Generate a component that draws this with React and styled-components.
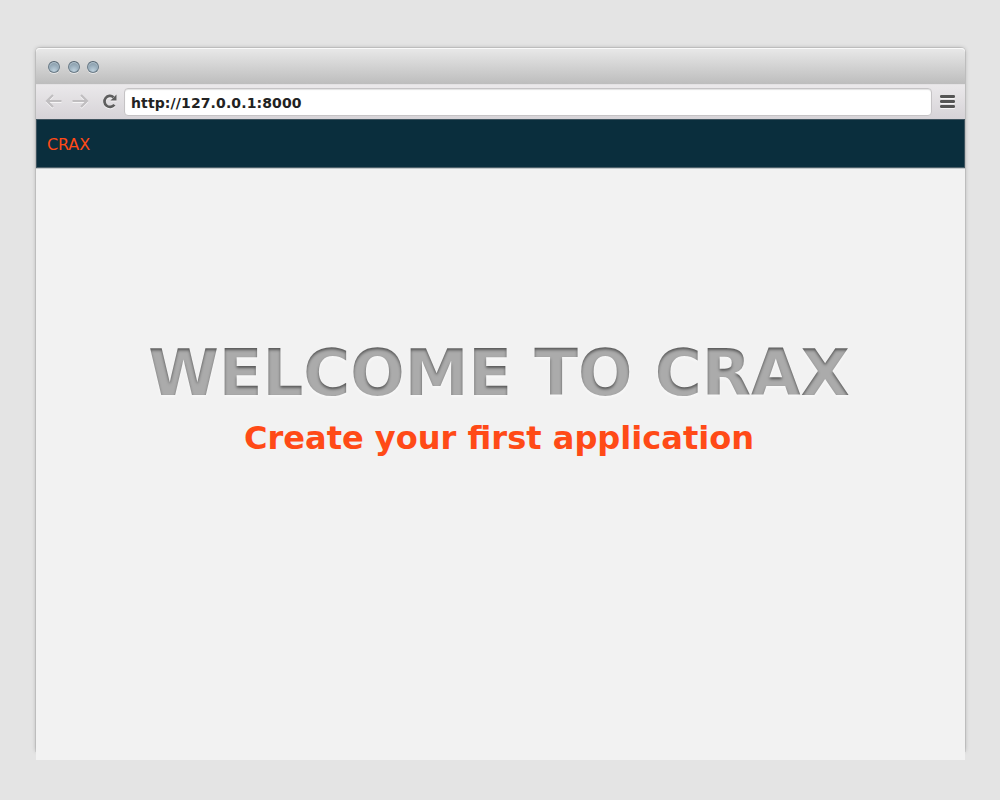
import React from "react";
import styled, { createGlobalStyle } from "styled-components";

const GlobalStyle = createGlobalStyle`
  * { box-sizing: border-box; }
  html, body { margin: 0; padding: 0; }
  body { background: #e4e4e4; font-family: "DejaVu Sans", sans-serif; }
`;

const Desktop = styled.div`
  height: 800px;
  padding: 48px 35px 0 36px;
  overflow: hidden;
`;

const BrowserWindow = styled.section`
  height: 703px;
  display: flex;
  flex-direction: column;
  border-radius: 4px 4px 0 0;
  box-shadow: 0 0 0 1px rgba(0, 0, 0, 0.07), 0 0 4px rgba(0, 0, 0, 0.25);
`;

const TitleBar = styled.header`
  flex: 0 0 36px;
  display: flex;
  align-items: center;
  gap: 7.5px;
  padding: 1px 12px 0;
  border-radius: 4px 4px 0 0;
  background: linear-gradient(#e9e9e9, #bdbdbd);
  box-shadow: inset 0 1px 0 #fafafa;
`;

const WindowButton = styled.span`
  width: 12px;
  height: 12px;
  border-radius: 50%;
  border: 1px solid #6b7c88;
  border-top-color: #53636f;
  background: radial-gradient(circle at 50% 85%, #bdd0dc 0%, #9db1bf 45%, #8599a6 85%);
  box-shadow: inset 0 1px 1px rgba(230, 242, 250, 0.5), 0 1px 0 rgba(255, 255, 255, 0.55);
`;

const Toolbar = styled.nav`
  flex: 0 0 35px;
  display: flex;
  align-items: center;
  padding: 0 10px 0 9px;
  background: linear-gradient(#ebe9eb, #d6d3d7);
  box-shadow: inset 0 1px 0 #e4e2e4;
`;

const Icon = styled.svg`
  display: block;
  flex: none;
  margin-left: ${(p) => p.$gap || 0}px;
  margin-bottom: ${(p) => p.$lift || 0}px;
  filter: drop-shadow(0 1px 0 rgba(255, 255, 255, 0.7));
`;

const AddressField = styled.div`
  flex: 1;
  height: 28px;
  margin: 0 8px 0 6px;
  padding: 2px 6px 0;
  border: 1px solid #c5c3c5;
  border-radius: 4px;
  background: #fff;
  box-shadow: inset 0 1px 1px rgba(0, 0, 0, 0.12);
  color: #222;
  font-size: 14px;
  font-weight: bold;
  line-height: 25px;
  letter-spacing: 0.12px;
`;

const Page = styled.main`
  flex: 0 0 641px;
  background: #f2f2f2;
`;

const SiteHeader = styled.div`
  height: 49px;
  padding-left: 10px;
  border: 1px solid #3e535e;
  border-bottom-color: #4c606a;
  box-shadow: 0 1px 0 #c4c9cb;
  background: #0a2e3d;
  color: #ff4a17;
  font-size: 16px;
  line-height: 49px;
  letter-spacing: -0.15px;
`;

const Welcome = styled.div`
  padding: 168px 3px 0 0;
  text-align: center;
`;

const Title = styled.h1`
  margin: 0;
  font-size: 64px;
  line-height: 74px;
  white-space: nowrap;
  color: transparent;
  background-color: #565656;
  background-clip: text;
  -webkit-background-clip: text;
  text-shadow: 0 2px 3px rgba(255, 255, 255, 0.5);
`;

const Subtitle = styled.h2`
  margin: 9px 0 0;
  color: #ff4a17;
  font-size: 32.07px;
  line-height: 38px;
`;

function BackArrow() {
  return (
    <Icon $lift={1} width="18" height="16" viewBox="0 0 18 16" fill="none" stroke="#c0bec0" strokeWidth="2.2">
      <path d="M16.5 8H2.5M8 2L2 8l6 6" />
    </Icon>
  );
}

function ForwardArrow() {
  return (
    <Icon $gap={8} $lift={1} width="18" height="16" viewBox="0 0 18 16" fill="none" stroke="#c0bec0" strokeWidth="2.2">
      <path d="M1.5 8h14M10 2l6 6-6 6" />
    </Icon>
  );
}

function Reload() {
  return (
    <Icon $gap={13} $lift={1} width="16" height="16" viewBox="0 0 16 16">
      <path d="M11.5 4.2A5.5 5.5 0 1 0 12.4 11.7" fill="none" stroke="#5e5e5e" strokeWidth="2.7" />
      <path d="M14.5 1.5V7.5H8.5Z" fill="#5e5e5e" />
    </Icon>
  );
}

function Menu() {
  return (
    <Icon width="15" height="15" viewBox="0 0 15 15" fill="#555">
      <rect y="1" width="15" height="3" rx="1.2" />
      <rect y="6" width="15" height="3" rx="1.2" />
      <rect y="11" width="15" height="3" rx="1.2" />
    </Icon>
  );
}

export default function App() {
  return (
    <Desktop>
      <GlobalStyle />
      <BrowserWindow>
        <TitleBar>
          <WindowButton />
          <WindowButton />
          <WindowButton />
        </TitleBar>
        <Toolbar>
          <BackArrow />
          <ForwardArrow />
          <Reload />
          <AddressField>http://127.0.0.1:8000</AddressField>
          <Menu />
        </Toolbar>
        <Page>
          <SiteHeader>CRAX</SiteHeader>
          <Welcome>
            <Title>WELCOME TO CRAX</Title>
            <Subtitle>Create your first application</Subtitle>
          </Welcome>
        </Page>
      </BrowserWindow>
    </Desktop>
  );
}
